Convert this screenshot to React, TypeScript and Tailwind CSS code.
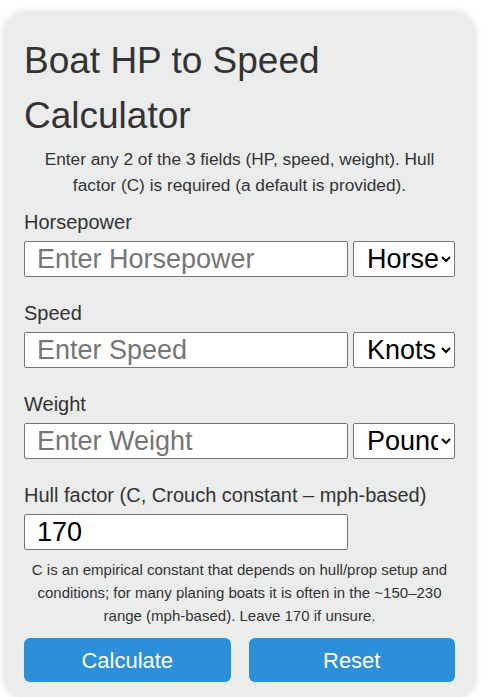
import React from "react";

const font = { fontFamily: '"Liberation Sans", Arial, sans-serif' };

function Field({ label, placeholder, options }: { label: string; placeholder: string; options: string[] }) {
  return (
    <div className="mt-[22px] first:mt-0">
      <label className="block text-[20px] leading-[28px] text-[#333] mb-[5px]">{label}</label>
      <div className="flex h-[36px]">
        <input
          type="number"
          placeholder={placeholder}
          className="w-[324px] h-[36px] bg-white border border-[#767676] rounded-[2px] px-[12px] text-[27px] text-black placeholder:text-[#757575] outline-none"
        />
        <select className="ml-auto w-[102px] h-[36px] bg-white border border-[#767676] rounded-[2px] pl-[9px] text-[27px] text-black">
          {options.map((o) => (
            <option key={o}>{o}</option>
          ))}
        </select>
      </div>
    </div>
  );
}

export default function App() {
  return (
    <div className="bg-white min-h-[697px] pt-[13px] pl-[5px]" style={font}>
      <div className="w-[469px] rounded-[20px] bg-[#ebecec] shadow-[0_0_8px_rgba(0,0,0,0.18)] px-[19px] pt-[20px] pb-[15px]">
        <h1 className="text-[37px] leading-[55px] text-[#333] font-normal">Boat HP to Speed Calculator</h1>
        <p className="mt-[3px] text-[17.3px] leading-[26px] text-[#333] text-center">
          Enter any 2 of the 3 fields (HP, speed, weight). Hull factor (C) is required (a default is provided).
        </p>
        <div className="mt-[10px]">
          <Field label="Horsepower" placeholder="Enter Horsepower" options={["Horsepower", "Kilowatts"]} />
          <Field label="Speed" placeholder="Enter Speed" options={["Knots", "MPH", "km/h"]} />
          <Field label="Weight" placeholder="Enter Weight" options={["Pounds", "Kilograms"]} />
          <div className="mt-[22px]">
            <label className="block text-[20px] leading-[28px] text-[#333] mb-[5px]">
              Hull factor (C, Crouch constant – mph-based)
            </label>
            <input
              type="number"
              defaultValue={170}
              className="w-[324px] h-[36px] bg-white border border-[#767676] rounded-[2px] px-[12px] text-[27px] text-black outline-none"
            />
          </div>
        </div>
        <p className="mt-[8px] text-[15px] leading-[23px] text-[#333] text-center">
          C is an empirical constant that depends on hull/prop setup and conditions; for many planing boats it is often in the ~150–230 range (mph-based). Leave 170 if unsure.
        </p>
        <div className="mt-[11px] flex gap-[18px]">
          <button className="flex-1 h-[44px] rounded-[6px] bg-[#2b90d9] text-white text-[22px]">Calculate</button>
          <button className="flex-1 h-[44px] rounded-[6px] bg-[#2b90d9] text-white text-[22px]">Reset</button>
        </div>
      </div>
    </div>
  );
}
